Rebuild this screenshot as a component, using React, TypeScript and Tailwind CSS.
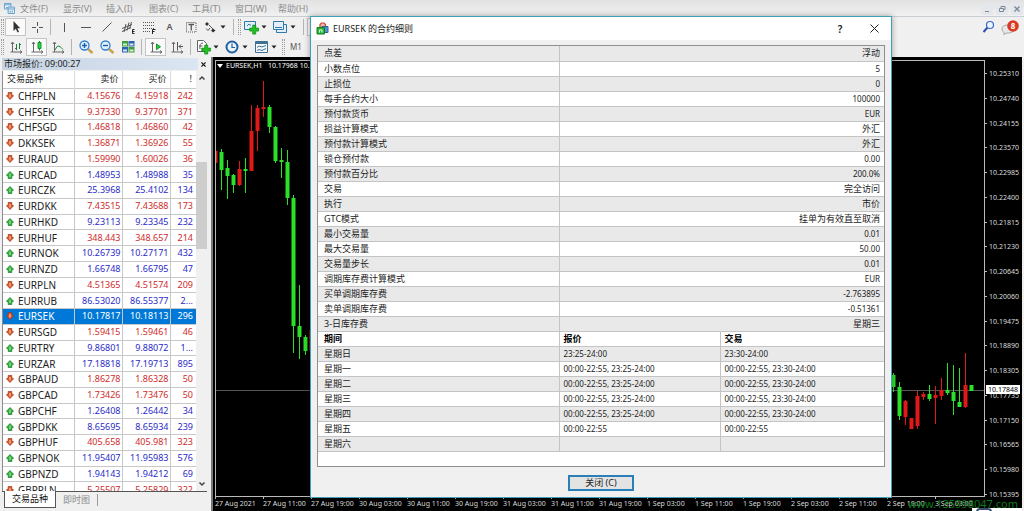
import React from "react";

type Quote = [string, string, string, string, "u" | "d"];

const quotes: Quote[] = [
  ["CHFPLN", "4.15676", "4.15918", "242", "d"],
  ["CHFSEK", "9.37330", "9.37701", "371", "d"],
  ["CHFSGD", "1.46818", "1.46860", "42", "d"],
  ["DKKSEK", "1.36871", "1.36926", "55", "d"],
  ["EURAUD", "1.59990", "1.60026", "36", "d"],
  ["EURCAD", "1.48953", "1.48988", "35", "u"],
  ["EURCZK", "25.3968", "25.4102", "134", "u"],
  ["EURDKK", "7.43515", "7.43688", "173", "d"],
  ["EURHKD", "9.23113", "9.23345", "232", "u"],
  ["EURHUF", "348.443", "348.657", "214", "d"],
  ["EURNOK", "10.26739", "10.27171", "432", "u"],
  ["EURNZD", "1.66748", "1.66795", "47", "u"],
  ["EURPLN", "4.51365", "4.51574", "209", "d"],
  ["EURRUB", "86.53020", "86.55377", "2...", "u"],
  ["EURSEK", "10.17817", "10.18113", "296", "d"],
  ["EURSGD", "1.59415", "1.59461", "46", "d"],
  ["EURTRY", "9.86801", "9.88072", "1...", "u"],
  ["EURZAR", "17.18818", "17.19713", "895", "u"],
  ["GBPAUD", "1.86278", "1.86328", "50", "d"],
  ["GBPCAD", "1.73426", "1.73476", "50", "d"],
  ["GBPCHF", "1.26408", "1.26442", "34", "u"],
  ["GBPDKK", "8.65695", "8.65934", "239", "u"],
  ["GBPHUF", "405.658", "405.981", "323", "d"],
  ["GBPNOK", "11.95407", "11.95983", "576", "u"],
  ["GBPNZD", "1.94143", "1.94212", "69", "u"],
  ["GBPPLN", "5.25507", "5.25829", "322", "d"],
];

const specs: [string, string][] = [
  ["点差", "浮动"],
  ["小数点位", "5"],
  ["止损位", "0"],
  ["每手合约大小", "100000"],
  ["预付款货币", "EUR"],
  ["损益计算模式", "外汇"],
  ["预付款计算模式", "外汇"],
  ["锁仓预付款", "0.00"],
  ["预付款百分比", "200.0%"],
  ["交易", "完全访问"],
  ["执行", "市价"],
  ["GTC模式", "挂单为有效直至取消"],
  ["最小交易量", "0.01"],
  ["最大交易量", "50.00"],
  ["交易量步长", "0.01"],
  ["调期库存费计算模式", "EUR"],
  ["买单调期库存费", "-2.763895"],
  ["卖单调期库存费", "-0.51361"],
  ["3-日库存费", "星期三"],
];

const sessions: [string, string, string][] = [
  ["星期日", "23:25-24:00", "23:30-24:00"],
  ["星期一", "00:00-22:55, 23:25-24:00", "00:00-22:55, 23:30-24:00"],
  ["星期二", "00:00-22:55, 23:25-24:00", "00:00-22:55, 23:30-24:00"],
  ["星期三", "00:00-22:55, 23:25-24:00", "00:00-22:55, 23:30-24:00"],
  ["星期四", "00:00-22:55, 23:25-24:00", "00:00-22:55, 23:30-24:00"],
  ["星期五", "00:00-22:55", "00:00-22:55"],
  ["星期六", "", ""],
];

const prices = [
  "10.25310", "10.24740", "10.24155", "10.23570", "10.22985", "10.22400",
  "10.21815", "10.21230", "10.20645", "10.20060", "10.19475", "10.18890",
  "10.18305", "10.17735", "10.17150", "10.16565", "10.15980", "10.15395",
];

const times = [
  "27 Aug 2021", "27 Aug 11:00", "27 Aug 19:00", "30 Aug 03:00",
  "30 Aug 11:00", "30 Aug 19:00", "31 Aug 03:00", "31 Aug 11:00",
  "31 Aug 19:00", "1 Sep 03:00", "1 Sep 11:00", "1 Sep 19:00",
  "2 Sep 03:00", "2 Sep 11:00", "2 Sep 19:00", "3 Sep 03:00",
];

// x, body top, body bottom, wick top, wick bottom, colour
const candles: [number, number, number, number, number, "r" | "g"][] = [
  [215, 151, 163, 145, 176, "r"],
  [221, 152, 170, 149, 190, "g"],
  [227, 168, 176, 160, 199, "g"],
  [233, 175, 185, 174, 193, "g"],
  [239, 169, 185, 161, 186, "r"],
  [245, 169, 171, 158, 193, "g"],
  [251, 131, 171, 105, 171, "r"],
  [257, 108, 131, 105, 151, "r"],
  [263, 107, 109, 81, 117, "r"],
  [269, 107, 127, 105, 133, "g"],
  [275, 127, 161, 126, 163, "g"],
  [281, 160, 162, 148, 178, "g"],
  [287, 162, 198, 150, 205, "g"],
  [293, 198, 326, 195, 353, "g"],
  [299, 326, 337, 285, 359, "g"],
  [305, 337, 351, 335, 355, "g"],
  [311, 330, 350, 330, 350, "r"],
  [893, 375, 387, 373, 392, "g"],
  [899, 387, 416, 382, 420, "g"],
  [905, 401, 417, 400, 425, "r"],
  [911, 418, 429, 418, 429, "r"],
  [917, 396, 426, 391, 429, "r"],
  [923, 394, 397, 392, 400, "r"],
  [929, 394, 399, 385, 401, "g"],
  [935, 395, 398, 386, 424, "r"],
  [941, 390, 396, 378, 400, "r"],
  [947, 390, 393, 363, 395, "g"],
  [953, 392, 401, 365, 415, "g"],
  [959, 402, 407, 368, 407, "g"],
  [965, 385, 407, 353, 408, "r"],
  [971, 385, 391, 385, 391, "g"],
];

function Icon({ children }: { children: React.ReactNode }) {
  return (
    <svg viewBox="0 0 16 16" className="h-4 w-4 shrink-0" fill="none" stroke="#555" strokeWidth="1">
      {children}
    </svg>
  );
}

function Tool({ label, pressed, caret, children }: { label: string; pressed?: boolean; caret?: boolean; children: React.ReactNode }) {
  return (
    <button
      type="button"
      aria-label={label}
      className={
        "flex h-[18px] shrink-0 items-center " +
        (caret ? "w-[29px] pl-px " : "w-[21px] justify-center ") +
        (pressed ? "border border-[#c4c4c4] bg-[#fafafa]" : "")
      }
    >
      {children}
      {caret && (
        <svg viewBox="0 0 6 4" className="ml-0.5 h-1 w-[6px]" fill="#222">
          <path d="M0.5 0.5h5L3 3.5z" />
        </svg>
      )}
    </button>
  );
}

function Sep() {
  return <span className="mx-[3px] h-4 w-px shrink-0 bg-[#b4b4b4]" />;
}

function Grip() {
  return <span className="mx-px h-4 w-[3px] shrink-0 border-x border-dotted border-[#9a9a9a]" />;
}

const axes = <path d="M4.500 3.500v9.500h9M3 5l1.500-2L6 5M12 11.500l2 1.500-2 1.500M2.500 13h2" stroke="#666" />;
const plus = <path d="M10.500 5.500h3v3h3v3h-3v3h-3v-3h-3v-3h3z" fill="#22c122" stroke="#0b8a17" strokeWidth=".7" transform="translate(-.8 .6)" />;

function Magnifier({ plusSign }: { plusSign: boolean }) {
  return (
    <Icon>
      <path d="M10 10l4.500 4" stroke="#c9a24b" strokeWidth="2.400" />
      <circle cx="6.500" cy="6.500" r="4.500" fill="#e4f1fc" stroke="#2f7fd0" strokeWidth="1.300" />
      <path d={plusSign ? "M4 6.500h5M6.500 4v5" : "M4 6.500h5"} stroke="#1d5fae" strokeWidth="1.400" />
    </Icon>
  );
}

function Arrow({ dir }: { dir: "u" | "d" }) {
  return dir === "u" ? (
    <svg viewBox="0 0 8 8" className="h-2 w-2 shrink-0">
      <path d="M4 .5L7.600 4.300 5.800 5V7.500H2.200V5L.4 4.300z" fill="#2fae3c" stroke="#17802a" strokeWidth=".7" />
      <path d="M4 2.500V6" stroke="#b8f0b4" />
    </svg>
  ) : (
    <svg viewBox="0 0 8 8" className="h-2 w-2 shrink-0">
      <path d="M4 7.500L.4 3.700 2.200 3V.5H5.800V3L7.600 3.700z" fill="#d9582c" stroke="#9c3515" strokeWidth=".7" />
      <path d="M4 2V5.500" stroke="#ffd2b0" />
    </svg>
  );
}

function MenuBar() {
  const menus = ["文件(F)", "显示(V)", "插入(I)", "图表(C)", "工具(T)", "窗口(W)", "帮助(H)"];
  return (
    <header className="flex h-[17px] shrink-0 items-center border-b border-[#c9ced3] bg-gradient-to-b from-[#e2e2e2] to-[#f1f1f1] pt-px text-[9px] leading-3 text-[#8c8c8c]">
      <svg viewBox="0 0 12 12" className="ml-1 h-[11px] w-[11px]" fill="#e8f3fb" stroke="#5b9bc9">
        <path d="M.5.5h7v6h-7z" />
        <path d="M.5 2h7M2 4.500l1.500 1 1.500-1.500" />
        <path d="M4.500 4.500h7v7h-7z" />
        <path d="M4.500 6.500h7M6 9h1v1.500M9 8v2.500" />
      </svg>
      <nav className="ml-[5px] flex">
        {menus.map((m) => (
          <button key={m} type="button" className="w-[43px] text-left whitespace-nowrap">{m}</button>
        ))}
      </nav>
      <div className="ml-auto flex gap-[3px] pr-px">
        <button type="button" aria-label="最小化" className="flex h-3 w-3 items-center justify-center bg-[#e4e8ec]">
          <svg viewBox="0 0 8 8" className="h-2 w-2" stroke="#7c8894"><path d="M2 6.500h4" /></svg>
        </button>
        <button type="button" aria-label="还原" className="flex h-3 w-3 items-center justify-center bg-[#e4e8ec]">
          <svg viewBox="0 0 8 8" className="h-2 w-2" stroke="#7c8894" fill="none"><path d="M1.500 3.500h4v3h-4zM3 3V1.500h4v3H6" /></svg>
        </button>
        <button type="button" aria-label="关闭窗口" className="flex h-3 w-3 items-center justify-center bg-[#e4e8ec]">
          <svg viewBox="0 0 8 8" className="h-2 w-2" stroke="#7c8894" strokeWidth="1.300"><path d="M1.500 1.500l5 5M6.500 1.500l-5 5" /></svg>
        </button>
      </div>
    </header>
  );
}

function Toolbars() {
  return (
    <div className="shrink-0 bg-[#f0f0f0]">
      <div className="flex h-5 items-center">
        <Grip />
        <Tool label="光标" pressed><Icon><path d="M5.500 2v10l2.300-2.200 1.700 3.700 1.500-.7-1.700-3.600h3z" fill="#333" stroke="none" /></Icon></Tool>
        <Tool label="十字线"><Icon><path d="M8.500 3v4M8.500 10V14M3 8.500h4M10 8.500H14" /></Icon></Tool>
        <Sep />
        <Tool label="垂直线"><Icon><path d="M7.500 4v9" /></Icon></Tool>
        <Tool label="水平线"><Icon><path d="M3 8.500h10" /></Icon></Tool>
        <Tool label="趋势线"><Icon><path d="M3.500 12.500l9-9" /></Icon></Tool>
        <Tool label="等距通道">
          <Icon><path d="M2 9.500l10-4M2 12.500l9-4M4 13l2-8M7 11.500l2-8M9.500 10l2-7" /><path d="M14.500 10.500h-2v4h2M12.500 12.500h2" stroke="#222" /></Icon>
        </Tool>
        <Tool label="斐波纳契">
          <Icon><path d="M2 3.500h11M2 6.500h11M2 9.500h11M2 12.500h7" strokeDasharray="1 1" /><path d="M11.500 15v-4.500h3M11.500 12.500h2" stroke="#222" /></Icon>
        </Tool>
        <Tool label="文字"><span className="text-[9px] leading-3 font-semibold text-[#555]">A</span></Tool>
        <Tool label="文字标签">
          <Icon><path d="M3.500 3.500h9.500v9.500h-9.500z" strokeDasharray="1 1" /><path d="M5.500 5.500h5.500M8.250 5.500v6" strokeWidth="1.300" /></Icon>
        </Tool>
        <Tool label="箭头" caret>
          <Icon><path d="M3 5l2-2 2 2-2 2zM9 11.500l2-2 2.500 2-2.500 2z" fill="#333" stroke="none" /><path d="M7 6l4 4M4 9.500l2 2 2-2.500" /></Icon>
        </Tool>
        <Sep />
        <Grip />
        <Tool label="新图表" caret>
          <Icon><path d="M1.500 2.500h11v8h-11z" fill="#e3f0fa" stroke="#2f78a8" /><path d="M4 7l2-2 2 1.500" stroke="#2f78a8" />{plus}</Icon>
        </Tool>
        <Tool label="配置文件" caret>
          <Icon><path d="M4.500 5.500h10v8h-10z" fill="#e3f0fa" stroke="#2f78a8" /><path d="M1.500 2.500h10v8h-10z" fill="#e3f0fa" stroke="#2f78a8" /><path d="M3 8.500h7" stroke="#2f78a8" /></Icon>
        </Tool>
        <Sep />
        <Tool label="市场报价" pressed>
          <Icon><path d="M1.500 2.500h13v11h-13z" fill="#fff" stroke="#5b9bc9" /><path d="M3 7l3-3 3 3-3 3z" fill="#22b32f" stroke="none" /><path d="M8 10l2.500-2.500L13 10l-2.500 2.500z" fill="#d64a28" stroke="none" /></Icon>
        </Tool>
        <div className="ml-auto flex items-center gap-1 pr-[5px]">
          <button type="button" aria-label="搜索">
            <Icon><path d="M6.500 8.500L2.500 13" stroke="#2a4fb0" strokeWidth="2" /><circle cx="9" cy="6" r="3.500" fill="#eef4fd" stroke="#3a66cf" strokeWidth="1.200" /></Icon>
          </button>
          <button type="button" aria-label="通知" className="relative flex h-4 w-[18px] items-center justify-end">
            <svg viewBox="0 0 18 16" className="absolute inset-0 h-4 w-[18px]">
              <path d="M1 10q0-4 6-4t6 4-6 4H5l-2 2v-2.500Q1 12.500 1 10z" fill="#e8e8e8" stroke="#a8a8a8" />
              <circle cx="12" cy="7" r="5.800" fill="#d93a22" />
            </svg>
            <span className="relative -top-px w-3 text-center text-[8px] leading-[10px] font-bold text-white">8</span>
          </button>
        </div>
      </div>
      <div className="flex h-5 items-center">
        <Grip />
        <Tool label="柱状图"><Icon>{axes}<path d="M8.500 5v6M8.500 9.500H7M11.500 4v6M11.500 5.500H13" stroke="#1f7a3d" /></Icon></Tool>
        <Tool label="蜡烛图" pressed><Icon>{axes}<path d="M10.500 2v9.500" stroke="#12932a" /><path d="M9 3.500h3v6H9z" fill="#2fd044" stroke="#12932a" /></Icon></Tool>
        <Tool label="折线图"><Icon>{axes}<path d="M5 11q2-5 4-4t4 3.500" stroke="#1f8a3d" /></Icon></Tool>
        <Sep />
        <Tool label="放大"><Magnifier plusSign /></Tool>
        <Tool label="缩小"><Magnifier plusSign={false} /></Tool>
        <Tool label="平铺窗口">
          <Icon>
            <path d="M2 2h6v5.500H2zM8.500 8h6v5.500h-6z" fill="#3f9e3a" stroke="none" />
            <path d="M8.500 2h6v5.500h-6zM2 8h6v5.500H2z" fill="#2a63b8" stroke="none" />
            <path d="M3 4.500h4v2H3zM9.500 4.500h4v2h-4zM3 10.500h4v2H3zM9.500 10.500h4v2h-4z" fill="#dcebd8" stroke="none" />
          </Icon>
        </Tool>
        <Sep />
        <Tool label="自动滚动" pressed><Icon>{axes}<path d="M8.500 5v5.500l4-2.700z" fill="#2fd044" stroke="#12932a" /></Icon></Tool>
        <Tool label="图表平移"><Icon>{axes}<path d="M8.500 3v8.500M14 7.500h-4M12 5.500l-2 2 2 2" stroke="#555" /></Icon></Tool>
        <Sep />
        <Tool label="技术指标" caret>
          <Icon><path d="M2.500 1.500h6l3 3v8h-9z" fill="#fff" stroke="#666" /><path d="M5 10q-1-6 3-6M4.500 7h3" />{plus}</Icon>
        </Tool>
        <Tool label="时间周期" caret>
          <Icon><circle cx="8" cy="8" r="5.500" fill="#eaf4fd" stroke="#24609c" strokeWidth="2" /><path d="M8 4.500V8.500h3" stroke="#24609c" strokeWidth="1.200" /></Icon>
        </Tool>
        <Tool label="模板" caret>
          <Icon><path d="M2.500 2.500h12v11h-12z" fill="#f4f9fd" stroke="#3d7291" /><path d="M3 4h11" stroke="#3d7291" strokeWidth="2" /><path d="M4 8.500l2-1.500 3 1 4-1.500M4 11.500l2-1 3 1 4-2" stroke="#3d7291" /></Icon>
        </Tool>
        <Grip />
        {["M1", "M5"].map((t) => (
          <button key={t} type="button" className="w-5 shrink-0 text-center text-[8px] leading-3 text-[#555]">{t}</button>
        ))}
      </div>
    </div>
  );
}

function MarketWatch() {
  return (
    <aside className="flex w-[211px] shrink-0 flex-col bg-[#f0f0f0] pl-0.5">
      <div className="flex h-[14px] shrink-0 items-center justify-between bg-[#f0f0f0] pr-[2px] text-[9px] leading-3 text-[#222]">
        <h2 className="flex-1 bg-gradient-to-r from-[#c6d3e2] to-[#dbe6f2] pl-0.5">市场报价: 09:00:27</h2>
        <button type="button" aria-label="关闭" className="flex h-3 w-[11px] items-center justify-center">
          <svg viewBox="0 0 6 6" className="h-[5px] w-[5px]" stroke="#111" strokeWidth="1.400"><path d="M.5.5l5 5M5.500.5l-5 5" /></svg>
        </button>
      </div>
      <div className="flex min-h-0 flex-1 border-l border-[#8c8c8c]">
        <div className="min-h-0 flex-1 overflow-hidden bg-white">
          <table className="h-[427px] w-full table-fixed border-collapse text-[9px] leading-3">
            <colgroup>
              <col />
              <col className="w-12" />
              <col className="w-12" />
              <col className="w-[26px]" />
            </colgroup>
            <thead>
              <tr className="h-[17px] border-b border-[#c8c8c8] text-[#222]">
                <th className="border-r border-[#dcdcdc] p-0 pl-1 text-left font-normal">交易品种</th>
                <th className="border-r border-[#dcdcdc] p-0 pr-[3px] text-right font-normal">卖价</th>
                <th className="border-r border-[#dcdcdc] p-0 pr-[3px] text-right font-normal">买价</th>
                <th className="p-0 pr-1 text-right font-normal">!</th>
              </tr>
            </thead>
            <tbody>
              {quotes.map(([s, bid, ask, spread, dir]) => {
                const on = s === "EURSEK";
                return (
                  <tr
                    key={s}
                    className={
                      "border-b border-[#c8c8c8] " +
                      (on ? "bg-[#0078d7] text-white" : dir === "u" ? "text-[#2a2ac8]" : "text-[#cf2b2b]")
                    }
                  >
                    <td className="border-r border-[#c8c8c8] p-0 pl-[3px]">
                      <span className="flex items-center gap-1">
                        <Arrow dir={dir} />
                        <span className={on ? "text-[10px] text-white" : "text-[10px] text-[#222]"}>{s}</span>
                      </span>
                    </td>
                    <td className="border-r border-[#c8c8c8] p-0 pr-px text-right">{bid}</td>
                    <td className="border-r border-[#c8c8c8] p-0 pr-px text-right">{ask}</td>
                    <td className="p-0 pr-[3px] text-right">{spread}</td>
                  </tr>
                );
              })}
            </tbody>
          </table>
        </div>
        <div className="mr-1 flex w-[11px] shrink-0 flex-col items-center justify-between bg-[#f0f0f0] py-1">
          <svg viewBox="0 0 8 6" className="h-[6px] w-2" fill="none" stroke="#444" strokeWidth="1.500"><path d="M1.500 4.500L4 2l2.500 2.500" /></svg>
          <div className="flex w-full flex-1 flex-col">
            <div className="flex-[81]" />
            <div className="flex-[86] bg-[#cdcdcd]" />
            <div className="flex-[231]" />
          </div>
          <svg viewBox="0 0 8 6" className="h-[6px] w-2" fill="none" stroke="#444" strokeWidth="1.500"><path d="M1.500 1.500L4 4l2.500-2.500" /></svg>
        </div>
      </div>
      <div role="tablist" className="mr-1 flex h-5 shrink-0 items-start border-t border-[#555] pl-0.5 text-[9px] leading-3">
        <button type="button" role="tab" aria-selected="true" className="-mt-px h-[17px] w-[52px] border border-t-0 border-[#555] bg-white text-[#111]">交易品种</button>
        <button type="button" role="tab" aria-selected="false" className="mt-0.5 h-3 w-[42px] border-r border-[#999] text-[#8c8c8c]">即时图</button>
      </div>
    </aside>
  );
}

function Chart() {
  return (
    <main className="relative flex min-w-0 flex-1 flex-col border-l-2 border-[#777] bg-black pt-[3px] pl-0.5 text-[7px] leading-[9px] text-[#ddd]">
      <div className="flex min-h-0 flex-1">
        <div className="relative min-w-0 flex-1 border border-[#bbb]">
          <svg viewBox="216 61 768 435" preserveAspectRatio="none" className="block h-full w-full">
            <path d="M216 390.500H984" stroke="#555" />
            {candles.map(([x, t, b, wt, wb, c]) => (
              <g key={x} fill={c === "r" ? "#e01818" : "#2be02b"}>
                <rect x={x} y={wt} width="1" height={wb - wt} />
                <rect x={x - 1.5} y={t} width="4" height={b - t} />
              </g>
            ))}
          </svg>
          <div className="absolute top-0 left-px flex items-center gap-[3px] text-[7px] leading-[10px] whitespace-nowrap text-white">
            <svg viewBox="0 0 6 4" className="h-1 w-[6px]" fill="#fff"><path d="M0 0h6L3 4z" /></svg>
            EURSEK,H1&nbsp;&nbsp; 10.17968 10.18113
          </div>
        </div>
        <div className="relative -mb-0.5 flex w-[37px] shrink-0 flex-col justify-between pt-[9px]">
          {prices.map((p) => (
            <div key={p} className="flex items-center gap-[2px]">
              <span className="h-px w-0.5 bg-[#bbb]" />
              {p}
            </div>
          ))}
          <div className="absolute top-[325px] left-px bg-white px-[2px] text-black">10.17848</div>
        </div>
      </div>
      <div className="flex h-[14px] shrink-0">
        {times.map((t) => (
          <div key={t} className="w-12 shrink-0 whitespace-nowrap">
            <span className="block h-0.5 w-px bg-[#bbb]" />
            {t}
          </div>
        ))}
      </div>
      <div className="absolute right-1 bottom-0 text-[11px] leading-[15px] text-[#0a7a1a]">www.135998047.com</div>
      <div className="absolute right-0 bottom-0 flex h-[3px] w-[50px] overflow-hidden bg-white pl-1">
        <span className="h-2 w-4 shrink-0 rounded-full border-2 border-[#3a4a6a]" />
      </div>
    </main>
  );
}

function SpecDialog() {
  return (
    <section
      role="dialog"
      aria-labelledby="dlg-title"
      className="absolute top-4 left-[310px] w-[582px] border border-[#3f9fb8] bg-[#f0f0f0] text-[9px] leading-3 text-[#1c1c1c] shadow-[0_0_6px_rgba(0,0,0,0.35)]"
    >
      <div className="flex h-[23px] items-center bg-white pl-[5px]">
        <svg viewBox="0 0 13 13" className="h-[13px] w-[13px]">
          <path d="M4 5V2.500L5.500 1h2.500L9.500 2.500V5" fill="#f0b8a8" stroke="#c8472e" strokeWidth="1.200" />
          <path d="M6 4.500h6v6H6z" fill="#5a8fd0" stroke="#2f5f9f" />
          <path d="M1 5.500h7.500v6.500H1z" fill="#2fb53a" stroke="#157a20" />
          <path d="M3.500 10.500V8h2.500v2.500" fill="none" stroke="#d9ffd9" />
        </svg>
        <h1 id="dlg-title" className="ml-1 text-[9px]">EURSEK 的合约细则</h1>
        <button type="button" aria-label="帮助" className="ml-auto w-[34px] text-center text-[10px] font-semibold">?</button>
        <button type="button" aria-label="关闭对话框" className="flex h-full w-[34px] items-center justify-center">
          <svg viewBox="0 0 9 9" className="h-[9px] w-[9px]" stroke="#222"><path d="M.5.5l8 8M8.500.5l-8 8" /></svg>
        </button>
      </div>
      <div className="mx-[6px] mt-[5px] border border-[#8f8f8f] bg-white pb-[14px]">
        <table className="w-full table-fixed border-collapse text-[8px]">
          <colgroup>
            <col className="w-[241px]" />
            <col className="w-[161px]" />
            <col />
          </colgroup>
          <tbody>
            {specs.map(([k, v], i) => (
              <tr key={k} className={"h-[15px] border-b border-[#c4c4c4] " + (i % 2 ? "bg-white" : "bg-[#e9e9e9]")}>
                <th scope="row" className="border-r border-[#c4c4c4] p-0 pl-[6px] text-left text-[9px] font-normal">{k}</th>
                <td colSpan={2} className={"p-0 pr-1 text-right " + (/[\u4e00-\u9fff]/.test(v) ? "text-[9px]" : "")}>{v}</td>
              </tr>
            ))}
            <tr className="h-[15px] border-b border-[#c4c4c4] text-left text-[9px] font-bold text-black">
              <th className="border-r border-[#c4c4c4] p-0 pl-[6px]">期间</th>
              <th className="border-r border-[#c4c4c4] p-0 pl-1">报价</th>
              <th className="p-0 pl-1">交易</th>
            </tr>
            {sessions.map(([d, q, t], i) => (
              <tr key={d} className={"h-[15px] border-b border-[#c4c4c4] " + (i % 2 ? "bg-white" : "bg-[#e9e9e9]")}>
                <th scope="row" className="border-r border-[#c4c4c4] p-0 pl-[6px] text-left text-[9px] font-normal">{d}</th>
                <td className="border-r border-[#c4c4c4] p-0 pl-1">{q}</td>
                <td className="p-0 pl-1">{t}</td>
              </tr>
            ))}
          </tbody>
        </table>
      </div>
      <div className="flex justify-center pt-2 pb-[6px]">
        <button type="button" className="h-4 w-[66px] border-2 border-[#2b7fb8] bg-[#e3e3e3] text-[9px] leading-3">关闭 (C)</button>
      </div>
    </section>
  );
}

export default function App() {
  return (
    <div className="relative flex h-screen w-full flex-col overflow-hidden bg-[#f0f0f0] font-['Noto_Sans','Noto_Sans_CJK_SC',sans-serif]">
      <MenuBar />
      <Toolbars />
      <div className="flex min-h-0 flex-1 pr-0.5">
        <MarketWatch />
        <Chart />
      </div>
      <SpecDialog />
    </div>
  );
}
